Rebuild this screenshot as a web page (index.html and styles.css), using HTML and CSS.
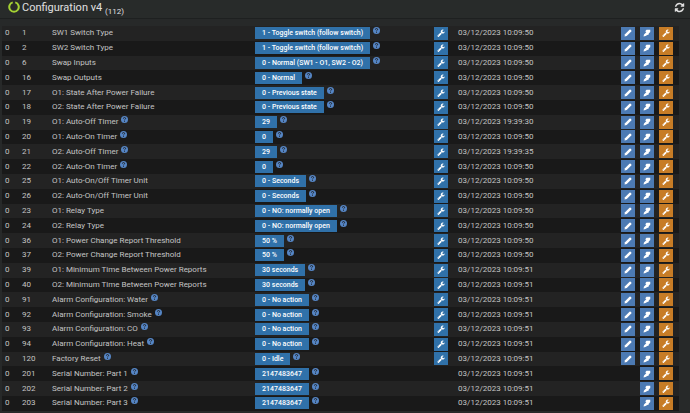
FILE: index.html
```html
<!DOCTYPE html>
<html lang="en">
<head>
    <meta charset="UTF-8">
    <meta name="viewport" content="width=device-width, initial-scale=1.0">
    <title>Configuration</title>
    <link rel="stylesheet" href="styles.css">
</head>
<body>
    <svg class="sprite">
        <symbol id="wrench" viewBox="0 0 1792 1792">
            <path d="M448 1472q0-26-19-45t-45-19-45 19-19 45 19 45 45 19 45-19 19-45zm644-420l-682 682q-37 37-90 37-52 0-91-37l-106-108q-38-36-38-90 0-53 38-91l681-681q39 98 114.500 173.500t173.500 114.500zm634-435q0 39-23 106-47 134-164.500 217.500t-258.500 83.500q-185 0-316.500-131.500t-131.500-316.500 131.500-316.500 316.500-131.500q58 0 121.500 16.500t107.500 46.500q16 11 16 28t-16 28l-293 169v224l193 107q5-3 79-48.500t135.500-81 70.500-35.500q15 0 23.500 10t8.500 25z"/>
        </symbol>
        <symbol id="refresh" viewBox="0 0 1792 1792">
            <path d="M1639 1056q0 5-1 7-64 268-268 434.500t-478 166.500q-146 0-282.500-55t-243.500-157l-129 129q-19 19-45 19t-45-19-19-45v-448q0-26 19-45t45-19h448q26 0 45 19t19 45-19 45l-137 137q71 66 161 102t187 36q134 0 250-65t186-179q11-17 53-117 8-23 30-23h192q13 0 22.500 9.500t9.500 22.500zm25-800v448q0 26-19 45t-45 19h-448q-26 0-45-19t-19-45 19-45l138-138q-148-137-349-137-134 0-250 65t-186 179q-11 17-53 117-8 23-30 23h-199q-13 0-22.500-9.500t-9.500-22.500v-7q65-268 270-434.500t480-166.500q146 0 284 55.500t245 156.500l130-129q19-19 45-19t45 19 19 45z"/>
        </symbol>
        <symbol id="pencil" viewBox="0 0 16 16">
            <path d="M1 15l1-4.500L11 1.500q1.500-1 3 .500t.500 3L5.500 14z"/>
        </symbol>
        <symbol id="dropper" viewBox="0 0 16 16">
            <path d="M1 15l1-4L6.500 6.500 4.500 4.500 7 1.500H14.500V6L11.500 9v2L8.500 12 5 14z"/>
        </symbol>
        <symbol id="help" viewBox="0 0 16 16">
            <circle class="help-disc" cx="8" cy="8" r="8"/>
            <path class="help-mark" d="M5.500 6q0-2.500 2.500-2.500t2.500 2.300q0 1.200-1.300 1.900-1.200.7-1.200 2M8 11.200v2"/>
        </symbol>
    </svg>

    <header class="panel-header">
        <svg class="ring" viewBox="0 0 24 24">
            <path d="M14.500 2.800A9.500 9.500 0 1 1 9.500 2.800"/>
        </svg>
        <h1>Configuration v4 <sub>(112)</sub></h1>
        <button class="reload" aria-label="Refresh"><svg><use href="#refresh"/></svg></button>
    </header>

    <table class="config">
        <colgroup>
            <col class="col-instance">
            <col class="col-number">
            <col class="col-name">
            <col class="col-value">
            <col class="col-set">
            <col>
            <col class="col-action">
            <col class="col-action">
            <col class="col-last">
        </colgroup>
        <tbody id="params"></tbody>
    </table>

    <script src="params.js"></script>
</body>
</html>
```
FILE: styles.css
```css
* {
    box-sizing: border-box;
}
body {
    margin: 0;
    background: #272929;
    color: #c4c4c4;
    font-family: Roboto, "Liberation Sans", sans-serif;
    font-size: 8px;
}
svg {
    display: block;
    fill: currentColor;
}
.sprite {
    display: none;
}
.panel-header {
    display: flex;
    align-items: center;
    height: 19px;
    padding: 0 5px 4px 8px;
    border-bottom: 1px solid #1e2020;
    background: #282b2a;
}
.panel-header h1 {
    flex: 1;
    margin: 0 0 0 2px;
    padding-top: 4px;
    color: #e0e0e0;
    font-size: 11px;
    font-weight: 400;
    line-height: 14px;
}
.panel-header sub {
    font-size: 8px;
    line-height: 1;
}
.ring {
    width: 12px;
    height: 12px;
    fill: none;
    stroke: #a4d233;
    stroke-width: 4;
}
button {
    padding: 0;
    border: none;
    cursor: pointer;
}
.reload {
    background: none;
    color: #e0e0e0;
}
.reload svg {
    width: 11px;
    height: 11px;
}
.config {
    width: calc(100% - 13px);
    height: calc(100vh - 28px);
    margin: 7px 11px 2px 2px;
    border-collapse: collapse;
    table-layout: fixed;
}
.col-instance {
    width: 17px;
}
.col-number {
    width: 30px;
}
.col-name {
    width: 30%;
}
.col-value {
    width: 179px;
}
.col-set {
    width: 24px;
}
.col-action {
    width: 19px;
}
.col-last {
    width: 23px;
}
.config tr:nth-child(odd) {
    background: #232323;
}
.config tr:nth-child(even) {
    background: #191919;
}
.config td {
    padding: 0 0 0 3px;
    line-height: 12px;
    vertical-align: middle;
    white-space: nowrap;
}
.cell {
    display: flex;
    gap: 3px;
}
.value {
    padding: 0 7px;
    background: #3071a9;
    color: #fff;
    font-size: 7px;
    font-weight: 500;
}
.help {
    width: 7px;
    height: 7px;
}
.help-disc {
    fill: #5585c4;
}
.help-mark {
    fill: none;
    stroke: #1c1c1c;
    stroke-width: 2;
}
.action {
    display: block;
    width: 14px;
    height: 13px;
    padding: 2px 3px;
    background: #4c7ab3;
    color: #fff;
}
.action svg {
    width: 8px;
    height: 8px;
}
.action.set {
    background: #3071a9;
}
.action.expert {
    background: #c77c26;
}
```
FILE: params.js
```javascript
// number, name, value, time, help next to the name, read only
const params = [
    [1, 'SW1 Switch Type', '1 - Toggle switch (follow switch)', '10:09:50'],
    [2, 'SW2 Switch Type', '1 - Toggle switch (follow switch)', '10:09:50'],
    [6, 'Swap Inputs', '0 - Normal (SW1 - O1, SW2 - O2)', '10:09:50'],
    [16, 'Swap Outputs', '0 - Normal', '10:09:50'],
    [17, 'O1: State After Power Failure', '0 - Previous state', '10:09:50'],
    [18, 'O2: State After Power Failure', '0 - Previous state', '10:09:50'],
    [19, 'O1: Auto-Off Timer', '29', '19:39:30', true],
    [20, 'O1: Auto-On Timer', '0', '10:09:50', true],
    [21, 'O2: Auto-Off Timer', '29', '19:39:35', true],
    [22, 'O2: Auto-On Timer', '0', '10:09:50', true],
    [25, 'O1: Auto-On/Off Timer Unit', '0 - Seconds', '10:09:50'],
    [26, 'O2: Auto-On/Off Timer Unit', '0 - Seconds', '10:09:50'],
    [23, 'O1: Relay Type', '0 - NO: normally open', '10:09:50'],
    [24, 'O2: Relay Type', '0 - NO: normally open', '10:09:50'],
    [36, 'O1: Power Change Report Threshold', '50 %', '10:09:50'],
    [37, 'O2: Power Change Report Threshold', '50 %', '10:09:50'],
    [39, 'O1: Minimum Time Between Power Reports', '30 seconds', '10:09:51'],
    [40, 'O2: Minimum Time Between Power Reports', '30 seconds', '10:09:51'],
    [91, 'Alarm Configuration: Water', '0 - No action', '10:09:51', true],
    [92, 'Alarm Configuration: Smoke', '0 - No action', '10:09:51', true],
    [93, 'Alarm Configuration: CO', '0 - No action', '10:09:51', true],
    [94, 'Alarm Configuration: Heat', '0 - No action', '10:09:51', true],
    [120, 'Factory Reset', '0 - Idle', '10:09:51', true],
    [201, 'Serial Number: Part 1', '2147483647', '10:09:51', true, true],
    [202, 'Serial Number: Part 2', '2147483647', '10:09:51', true, true],
    [203, 'Serial Number: Part 3', '2147483647', '10:09:51', true, true]
];

const help = '<svg class="help"><use href="#help"/></svg>';

function action(icon, label, type = '') {
    return `<button class="action ${type}" aria-label="${label}"><svg><use href="#${icon}"/></svg></button>`;
}

document.getElementById('params').innerHTML = params.map(([number, name, value, time, nameHelp, readOnly]) => `
    <tr>
        <td>0</td>
        <td>${number}</td>
        <td><div class="cell">${name}${nameHelp ? help : ''}</div></td>
        <td><div class="cell"><span class="value">${value}</span>${help}</div></td>
        <td>${readOnly ? '' : action('wrench', 'Set value', 'set')}</td>
        <td>03/12/2023 ${time}</td>
        <td>${readOnly ? '' : action('pencil', 'Edit')}</td>
        <td>${action('dropper', 'Edit template')}</td>
        <td>${action('wrench', 'Expert settings', 'expert')}</td>
    </tr>`).join('');
```
